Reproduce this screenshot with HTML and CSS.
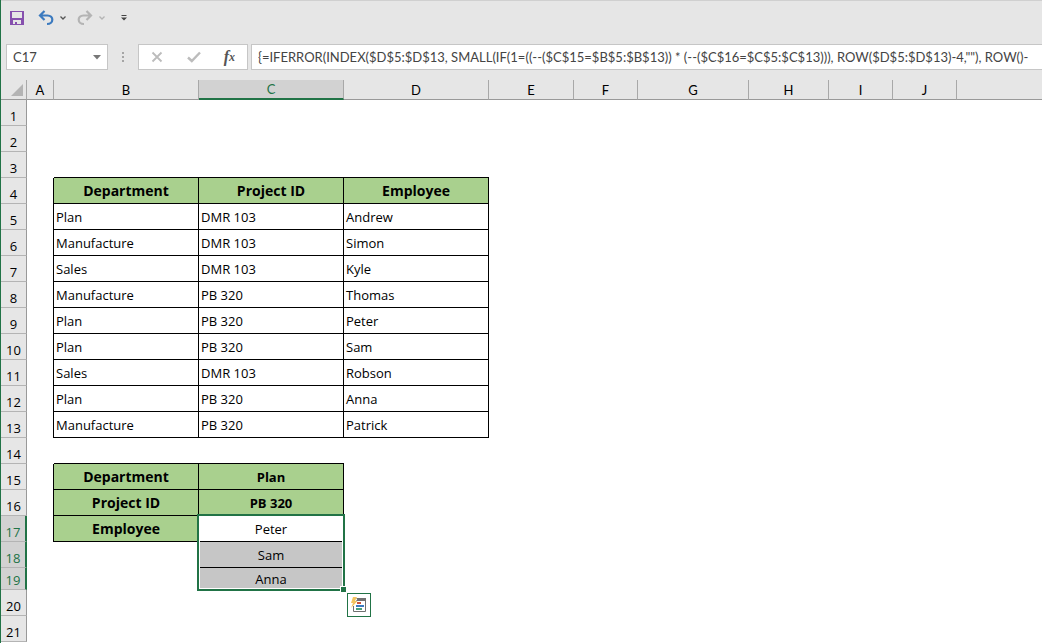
FILE: index.html
```html
<!DOCTYPE html>
<html lang="en">
<head>
<meta charset="utf-8">
<title>Workbook</title>
<link rel="stylesheet" href="styles.css">
</head>
<body>
<div class="app">
  <header class="quick-access">
    <button class="tool save" aria-label="Save">
      <svg width="16" height="16" viewBox="0 0 16 16"><path fill="#8650ae" fill-rule="evenodd" d="M1 1h14v14H1zM3 2v6h10V2zM4 10v4h2v-2h2v2h4v-4z"/></svg>
    </button>
    <button class="tool undo" aria-label="Undo">
      <svg width="16" height="16" viewBox="0 0 16 16"><path fill="none" stroke="#3b7abf" stroke-width="2.2" d="M2 5.500h7.500c6.500 0 6.500 8.500-.5 8.500M6.500 1L2 5.500L6.500 10"/></svg>
    </button>
    <button class="tool more" aria-label="Undo history">
      <svg width="6" height="4" viewBox="0 0 6 4"><path fill="none" stroke="#555" stroke-width="1.300" d="M.5.5L3 3L5.500.5"/></svg>
    </button>
    <button class="tool redo" aria-label="Redo">
      <svg width="16" height="16" viewBox="0 0 16 16"><path fill="none" stroke="#b4b4b4" stroke-width="2.200" d="M14 5.500H6.500c-6.500 0-6.500 8.500 .5 8.500M9.500 1L14 5.500L9.500 10"/></svg>
    </button>
    <button class="tool more" aria-label="Redo history">
      <svg width="6" height="4" viewBox="0 0 6 4"><path fill="none" stroke="#b4b4b4" stroke-width="1.300" d="M.5.5L3 3L5.500.5"/></svg>
    </button>
    <button class="tool customize" aria-label="Customize toolbar">
      <svg width="6" height="6" viewBox="0 0 6 6"><path fill="#444" d="M.5 0h5v1h-5zM0 2.500h6L3 5.500z"/></svg>
    </button>
  </header>

  <div class="formula-row">
    <div class="name-box">
      <input class="name-input" type="text" value="C17" aria-label="Name box">
      <button class="tool name-arrow" aria-label="Open names">
        <svg width="8" height="5" viewBox="0 0 8 5"><path fill="#777" d="M0 0h8L4 4.500z"/></svg>
      </button>
    </div>
    <svg class="grip" width="2" height="12" viewBox="0 0 2 12"><path fill="#a5a5a5" d="M0 1h2v2H0zM0 5h2v2H0zM0 9h2v2H0z"/></svg>
    <div class="formula-tools">
      <button class="tool" aria-label="Cancel">
        <svg width="14" height="14" viewBox="0 0 14 14"><path fill="none" stroke="#bcbcbc" stroke-width="1.800" d="M2.500 2.500l9 9M11.500 2.500l-9 9"/></svg>
      </button>
      <button class="tool" aria-label="Enter">
        <svg width="14" height="14" viewBox="0 0 14 14"><path fill="none" stroke="#bcbcbc" stroke-width="2.400" d="M1 7.500L4.800 11L13 2.500"/></svg>
      </button>
      <button class="tool fx" aria-label="Insert function">f<sub>x</sub></button>
    </div>
    <input class="formula" type="text" aria-label="Formula bar" value="{=IFERROR(INDEX($D$5:$D$13, SMALL(IF(1=((--($C$15=$B$5:$B$13)) * (--($C$16=$C$5:$C$13))), ROW($D$5:$D$13)-4,&quot;&quot;), ROW()-">
  </div>

  <main class="sheet">
    <table class="grid">
      <colgroup>
        <col class="w27"><col class="w27"><col class="w145"><col class="w145"><col class="w145"><col class="w85"><col class="w64"><col class="w111"><col class="w80"><col class="w64"><col class="w64"><col>
      </colgroup>
      <thead>
        <tr>
          <th class="corner"><svg width="12" height="12" viewBox="0 0 12 12"><path fill="#b4b4b4" d="M12 0v12H0z"/></svg></th>
          <th scope="col">A</th><th scope="col">B</th><th scope="col" class="active">C</th><th scope="col">D</th><th scope="col">E</th><th scope="col">F</th><th scope="col">G</th><th scope="col">H</th><th scope="col">I</th><th scope="col">J</th><th class="rest"></th>
        </tr>
      </thead>
      <tbody>
        <tr><th scope="row">1</th><td colspan="11"></td></tr>
        <tr><th scope="row">2</th><td colspan="11"></td></tr>
        <tr><th scope="row">3</th><td></td><td class="above"></td><td class="above"></td><td class="above"></td><td colspan="7"></td></tr>
        <tr><th scope="row">4</th><td class="edge"></td><td class="cell head">Department</td><td class="cell head">Project ID</td><td class="cell head">Employee</td><td colspan="7"></td></tr>
        <tr><th scope="row">5</th><td class="edge"></td><td class="cell">Plan</td><td class="cell">DMR 103</td><td class="cell">Andrew</td><td colspan="7"></td></tr>
        <tr><th scope="row">6</th><td class="edge"></td><td class="cell">Manufacture</td><td class="cell">DMR 103</td><td class="cell">Simon</td><td colspan="7"></td></tr>
        <tr><th scope="row">7</th><td class="edge"></td><td class="cell">Sales</td><td class="cell">DMR 103</td><td class="cell">Kyle</td><td colspan="7"></td></tr>
        <tr><th scope="row">8</th><td class="edge"></td><td class="cell">Manufacture</td><td class="cell">PB 320</td><td class="cell">Thomas</td><td colspan="7"></td></tr>
        <tr><th scope="row">9</th><td class="edge"></td><td class="cell">Plan</td><td class="cell">PB 320</td><td class="cell">Peter</td><td colspan="7"></td></tr>
        <tr><th scope="row">10</th><td class="edge"></td><td class="cell">Plan</td><td class="cell">PB 320</td><td class="cell">Sam</td><td colspan="7"></td></tr>
        <tr><th scope="row">11</th><td class="edge"></td><td class="cell">Sales</td><td class="cell">DMR 103</td><td class="cell">Robson</td><td colspan="7"></td></tr>
        <tr><th scope="row">12</th><td class="edge"></td><td class="cell">Plan</td><td class="cell">PB 320</td><td class="cell">Anna</td><td colspan="7"></td></tr>
        <tr><th scope="row">13</th><td class="edge"></td><td class="cell">Manufacture</td><td class="cell">PB 320</td><td class="cell">Patrick</td><td colspan="7"></td></tr>
        <tr><th scope="row">14</th><td></td><td class="above"></td><td class="above"></td><td colspan="8"></td></tr>
        <tr><th scope="row">15</th><td class="edge"></td><td class="cell head">Department</td><td class="cell head value">Plan</td><td colspan="8"></td></tr>
        <tr><th scope="row">16</th><td class="edge"></td><td class="cell head">Project ID</td><td class="cell head value">PB 320</td><td colspan="8"></td></tr>
        <tr><th scope="row" class="active">17</th><td class="edge"></td><td class="cell head">Employee</td><td class="cell result anchor">Peter
          <div class="selection">
            <span class="handle"></span>
            <button class="quick-analysis" aria-label="Quick analysis">
              <svg width="16" height="16" viewBox="0 0 16 16"><path fill="#fff" stroke="#707070" stroke-width="1" d="M5.500 1.500H14.500V14.500H2.500V9"/><path fill="#707070" d="M7 1h8v3H5z"/><path fill="#d0553c" d="M6 5h4v2H6z"/><path fill="#3b7abf" d="M5 8h8v2H5z"/><path fill="#4aa07a" d="M5 11h6v2H5z"/><path fill="#f2c45f" d="M2 0h4L4 4h2.500L0 11L2 6H0z"/></svg>
            </button>
          </div></td><td colspan="8"></td></tr>
        <tr><th scope="row" class="active">18</th><td></td><td></td><td class="cell result picked">Sam</td><td colspan="8"></td></tr>
        <tr class="short"><th scope="row" class="active">19</th><td></td><td></td><td class="cell result picked">Anna</td><td colspan="8"></td></tr>
        <tr><th scope="row">20</th><td colspan="11"></td></tr>
        <tr><th scope="row">21</th><td colspan="11"></td></tr>
      </tbody>
    </table>
  </main>
</div>
</body>
</html>
```
FILE: styles.css
```css
* { box-sizing: border-box; }

body {
  margin: 0;
  background: #fff;
  color: #000;
  font-family: "Open Sans", "Noto Sans", sans-serif;
  font-size: 13px;
}

.app {
  display: flex;
  flex-direction: column;
  height: 100vh;
  overflow: hidden;
  border-left: 1px solid #217346;
}

.tool {
  display: flex;
  align-items: center;
  justify-content: center;
  padding: 0;
  border: 0;
  background: none;
}

.quick-access {
  display: flex;
  flex: none;
  align-items: center;
  height: 44px;
  padding: 0 8px 9px;
  border-top: 1px solid #d0d0d0;
  background: #e6e6e6;
}

.undo { margin-left: 13px; }
.redo { margin-left: 11px; }
.more { margin-left: 6px; }
.customize { margin-left: 16px; }

.formula-row {
  display: flex;
  flex: none;
  align-items: flex-start;
  height: 36px;
  padding-left: 5px;
  background: #e6e6e6;
}

.name-box,
.formula-tools,
.formula {
  height: 26px;
  border: 1px solid #c6c6c6;
  background: #fff;
}

.name-box {
  display: flex;
  width: 102px;
  padding: 0 6px;
}

.name-input {
  flex: 1;
  min-width: 0;
  padding: 0;
  border: 0;
  outline: 0;
  color: #444;
  font: 13px Lato, sans-serif;
}

.grip {
  margin: 7px 14px 0;
}

.formula-tools {
  display: flex;
  align-items: center;
  justify-content: space-between;
  width: 110px;
  padding: 0 12px 0 11px;
}

.fx {
  color: #555;
  font: italic bold 16px/20px "Liberation Serif", serif;
}

.fx sub {
  font-size: 12px;
  line-height: 12px;
}

.formula {
  flex: 1;
  min-width: 0;
  margin-left: 3px;
  padding: 0 0 0 6px;
  border-right: 0;
  border-radius: 0;
  outline: 0;
  color: #444;
  font: 13px Lato, sans-serif;
}

.sheet {
  flex: 1;
  min-height: 0;
  overflow: hidden;
}

.grid {
  width: calc(100% + 1px);
  margin-left: -1px;
  border-collapse: separate;
  border-spacing: 0;
  table-layout: fixed;
  border-left: 1px solid #217346;
}

.w27 { width: 27px; }
.w64 { width: 64px; }
.w80 { width: 80px; }
.w85 { width: 85px; }
.w111 { width: 111px; }
.w145 { width: 145px; }
.w27:first-child { width: 26px; }

.grid th,
.grid td {
  height: 26px;
  padding: 0;
  line-height: 18px;
}

.grid th {
  background: #e6e6e6;
  font-weight: 400;
}

.grid thead th {
  height: 20px;
  border-right: 1px solid #a8a8a8;
  border-bottom: 1px solid #999;
  font-family: Lato, sans-serif;
}

.grid thead .rest { border-right: 0; }

.grid thead .corner {
  padding-right: 3px;
  text-align: right;
}

.corner svg {
  display: block;
  margin-left: auto;
}

.grid thead .active {
  border-bottom: 2px solid #217346;
  background: #d2d2d2;
  color: #217346;
}

.grid tbody th {
  padding-top: 6px;
  border-right: 1px solid #999;
  border-bottom: 1px solid #b4b4b4;
}

.grid tbody .active {
  border-right: 2px solid #217346;
  background: #d2d2d2;
  color: #217346;
}

.grid .short th,
.grid .short td {
  height: 22px;
}

.grid .short th { padding-top: 2px; }

.grid .above { border-bottom: 1px solid #000; }
.grid .edge { border-right: 1px solid #000; }

.grid .cell {
  padding-left: 2px;
  border-right: 1px solid #000;
  border-bottom: 1px solid #000;
}

.grid .head {
  padding-left: 0;
  background: #a9d08e;
  font-size: 14px;
  font-weight: 700;
  text-align: center;
}

.grid .value { font-size: 13px; }

.grid .result {
  padding-left: 0;
  text-align: center;
}

.grid .picked { background: #c6c6c6; }

.grid .anchor { position: relative; }

/* Selection frame spans the anchor cell and the two rows below it */
.selection {
  position: absolute;
  top: -2px;
  left: -2px;
  width: 148px;
  height: 77px;
  border: 2px solid #217346;
  box-shadow: inset 0 0 0 1px #fff;
}

.handle {
  position: absolute;
  right: -4px;
  bottom: -4px;
  width: 7px;
  height: 7px;
  border: 1px solid #fff;
  background: #217346;
}

.quick-analysis {
  position: absolute;
  top: 77px;
  left: 148px;
  display: flex;
  align-items: center;
  justify-content: center;
  width: 24px;
  height: 24px;
  padding: 0;
  border: 1px solid #217346;
  background: #fff;
}
```
